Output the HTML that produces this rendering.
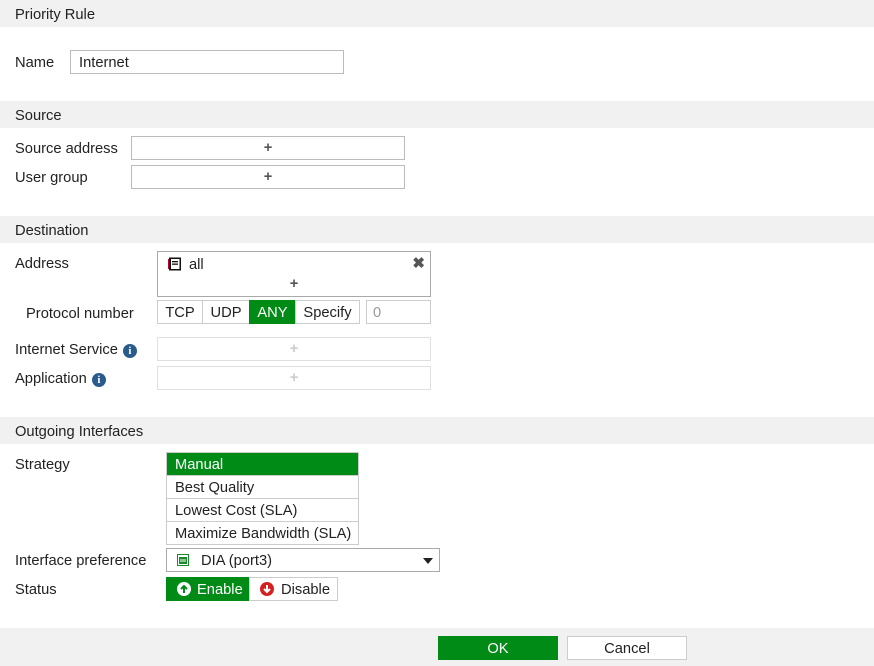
<!DOCTYPE html>
<html><head><style>
*{box-sizing:border-box;margin:0;padding:0}
body{width:874px;height:666px;background:#fff;font-family:"Liberation Sans",sans-serif;font-size:14.7px;color:#222;position:relative;overflow:hidden}
.a{position:absolute}
.hd{position:absolute;left:0;width:874px;height:27px;background:#f1f1f1;padding:7px 15px 0;line-height:16px}
.lbl{position:absolute;left:15px}
.box{position:absolute;border:1px solid #bbb;background:#fff;text-align:center;font-weight:bold;color:#555;line-height:22px}
.dis{border-color:#e0e0e0;color:#ccc}
.btn{position:absolute;top:300px;height:24px;border:1px solid #ccc;text-align:center;line-height:20px;padding-top:2px;background:#fff}
.g{background:#008a16;color:#fff;border-color:#008a16}
.li{position:absolute;left:166px;width:193px;height:24px;border:1px solid #ccc;padding:2px 0 0 8px;line-height:20px}
.info{display:inline-block;width:14px;height:14px;border-radius:50%;background:#2a5b8c;color:#fff;font-size:11px;font-weight:bold;text-align:center;line-height:14px;vertical-align:0px;margin-left:5px;font-family:"Liberation Serif",serif}
</style></head><body>
<div class="hd" style="top:0">Priority Rule</div>
<div class="lbl" style="top:55px">Name</div>
<div class="a" style="left:70px;top:50px;width:274px;height:24px;border:1px solid #bbb;padding:2px 0 0 8px;line-height:20px">Internet</div>

<div class="hd" style="top:101px">Source</div>
<div class="lbl" style="top:141px">Source address</div>
<div class="box" style="left:131px;top:136px;width:274px;height:24px">+</div>
<div class="lbl" style="top:170px">User group</div>
<div class="box" style="left:131px;top:165px;width:274px;height:24px">+</div>

<div class="hd" style="top:216px">Destination</div>
<div class="lbl" style="top:256px">Address</div>
<div class="a" style="left:157px;top:251px;width:274px;height:46px;border:1px solid #aaa">
 <svg class="a" style="left:10px;top:5px" width="14" height="14" viewBox="0 0 14 14"><rect x="1" y="0.5" width="12" height="13" fill="#111"/><rect x="3" y="2" width="8.5" height="10" fill="#fff"/><rect x="4" y="4" width="6" height="1.3" fill="#111"/><rect x="4" y="6.5" width="6" height="1.3" fill="#111"/><rect x="0" y="2" width="1" height="10" fill="#b03"/></svg>
 <span class="a" style="left:31px;top:5px">all</span>
 <span class="a" style="right:5px;top:2px;font-weight:bold;color:#555;font-size:15px">✖</span>
 <span class="a" style="left:0;width:272px;text-align:center;top:24px;font-weight:bold;color:#555">+</span>
</div>
<div class="a" style="left:26px;top:306px">Protocol number</div>
<div class="btn" style="left:157px;width:46px">TCP</div>
<div class="btn" style="left:202px;width:48px">UDP</div>
<div class="btn g" style="left:249px;width:47px">ANY</div>
<div class="btn" style="left:295px;width:65px">Specify</div>
<div class="a" style="left:366px;top:300px;width:65px;height:24px;border:1px solid #ccc;padding:2px 0 0 6px;line-height:20px;color:#999">0</div>
<div class="lbl" style="top:342px">Internet Service<span class="info">i</span></div>
<div class="box dis" style="left:157px;top:337px;width:274px;height:24px">+</div>
<div class="lbl" style="top:371px">Application<span class="info">i</span></div>
<div class="box dis" style="left:157px;top:366px;width:274px;height:24px">+</div>

<div class="hd" style="top:417px">Outgoing Interfaces</div>
<div class="lbl" style="top:457px">Strategy</div>
<div class="li g" style="top:452px">Manual</div>
<div class="li" style="top:475px">Best Quality</div>
<div class="li" style="top:498px">Lowest Cost (SLA)</div>
<div class="li" style="top:521px">Maximize Bandwidth (SLA)</div>
<div class="lbl" style="top:553px">Interface preference</div>
<div class="a" style="left:166px;top:548px;width:274px;height:24px;border:1px solid #aaa;line-height:20px;padding:2px 0 0 34px">DIA (port3)
 <svg class="a" style="left:10px;top:5px" width="12" height="12" viewBox="0 0 12 12"><rect x="0.5" y="0.5" width="11" height="11" fill="#fff" stroke="#1a8a2a"/><rect x="2" y="3" width="8" height="7" fill="#1a8a2a"/><rect x="3.5" y="5" width="1" height="3" fill="#fff"/><rect x="5.5" y="5" width="1" height="3" fill="#fff"/><rect x="7.5" y="5" width="1" height="3" fill="#fff"/></svg>
 <svg class="a" style="right:6px;top:9px" width="10" height="6" viewBox="0 0 10 6"><path d="M0 0H10L5 6Z" fill="#222"/></svg>
</div>
<div class="lbl" style="top:582px">Status</div>
<div class="a g" style="left:166px;top:577px;width:83px;height:24px;line-height:20px;padding:3px 0 0 31px">Enable
 <svg class="a" style="left:11px;top:5px" width="14" height="14" viewBox="0 0 14 14"><circle cx="7" cy="7" r="7" fill="#fff"/><path d="M7 11V4M4 7l3-3 3 3" stroke="#008a16" stroke-width="2" fill="none"/></svg></div>
<div class="a" style="left:249px;top:577px;width:89px;height:24px;border:1px solid #ccc;line-height:20px;padding:2px 0 0 31px">Disable
 <svg class="a" style="left:10px;top:4px" width="14" height="14" viewBox="0 0 14 14"><circle cx="7" cy="7" r="7" fill="#d42020"/><path d="M7 3V10M4 7l3 3 3-3" stroke="#fff" stroke-width="2" fill="none"/></svg></div>

<div class="a" style="left:0;top:628px;width:874px;height:38px;background:#f1f1f1"></div>
<div class="a g" style="left:438px;top:636px;width:120px;height:24px;line-height:20px;padding-top:3px;text-align:center">OK</div>
<div class="a" style="left:567px;top:636px;width:120px;height:24px;border:1px solid #ccc;background:#fff;line-height:20px;padding-top:2px;text-align:center">Cancel</div>
</body></html>
